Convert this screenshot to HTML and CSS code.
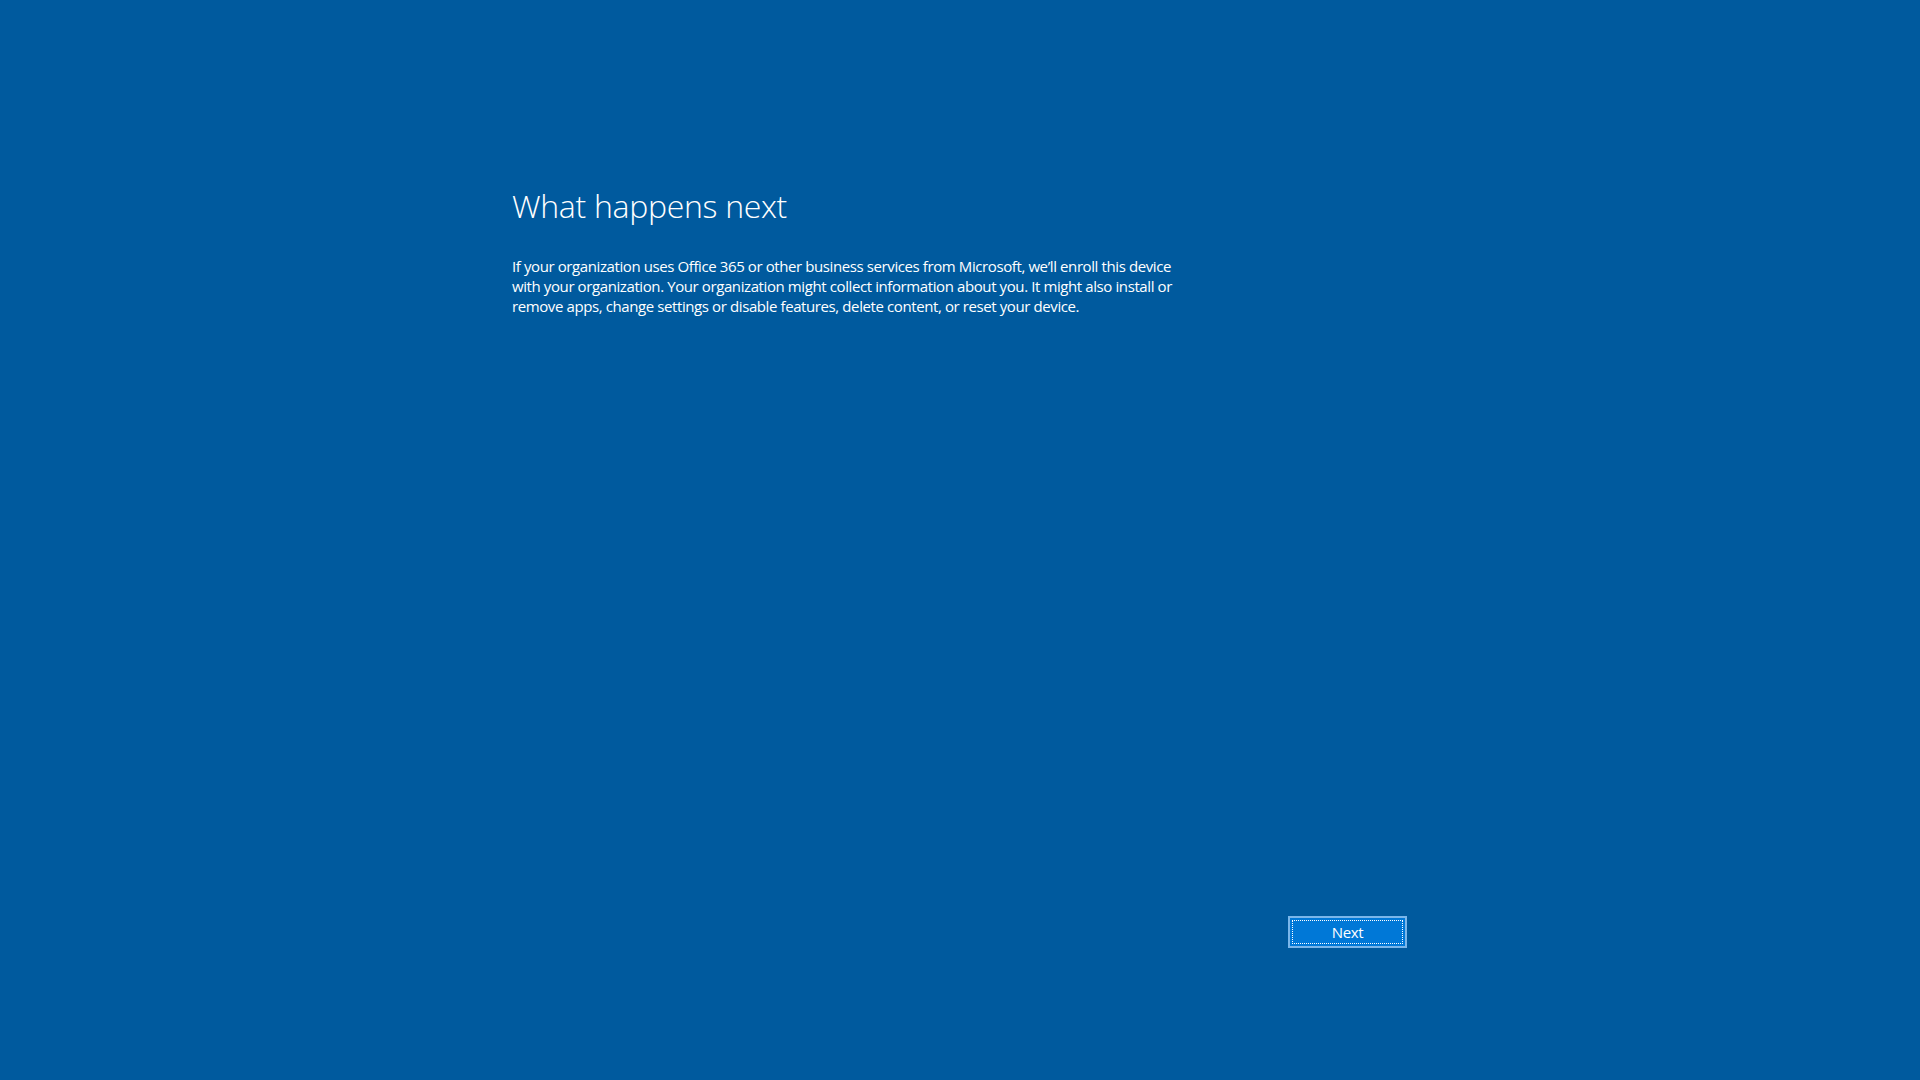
FILE: index.html
```html
<!DOCTYPE html>
<html lang="en">
<head>
<meta charset="utf-8">
<title>What happens next</title>
<link rel="stylesheet" href="styles.css">
</head>
<body>
<div class="page">
  <main class="content">
    <h1 class="title">What happens next</h1>
    <p class="desc">If your organization uses Office 365 or other business services from Microsoft, we’ll enroll this device with your organization. Your organization might collect information about you. It might also install or remove apps, change settings or disable features, delete content, or reset your device.</p>
  </main>
  <div class="actions">
    <button class="btn-next" type="button"><span class="focus">Next</span></button>
  </div>
</div>
</body>
</html>
```
FILE: styles.css
```css
html, body {
  margin: 0;
  padding: 0;
  height: 100%;
}
body {
  background: #005a9e;
  color: #ffffff;
  font-family: "Open Sans", "Noto Sans", "Liberation Sans", sans-serif;
}
.page {
  height: 100vh;
  width: 895px;
  margin-left: 512px;
  display: flex;
  flex-direction: column;
  box-sizing: border-box;
  padding-top: 186px;
  padding-bottom: 132px;
}
.content {
  flex: 1;
}
.title {
  margin: 0;
  font-weight: 300;
  font-size: 32px;
  line-height: 40px;
  letter-spacing: -0.3px;
}
.desc {
  margin: 30px 0 0 0;
  width: 674px;
  font-size: 15px;
  line-height: 20px;
  letter-spacing: -0.4px;
}
.actions {
  display: flex;
  justify-content: flex-end;
}
.btn-next {
  width: 119px;
  height: 32px;
  padding: 2px;
  margin: 0;
  background: #0078d7;
  border: 2px solid #7ab6ea;
  box-sizing: border-box;
  color: #ffffff;
  font-family: inherit;
  font-size: 15px;
  letter-spacing: -0.3px;
  cursor: pointer;
  display: flex;
}
.focus {
  flex: 1;
  border: 1px dotted #ffffff;
  display: flex;
  align-items: center;
  justify-content: center;
}
```
